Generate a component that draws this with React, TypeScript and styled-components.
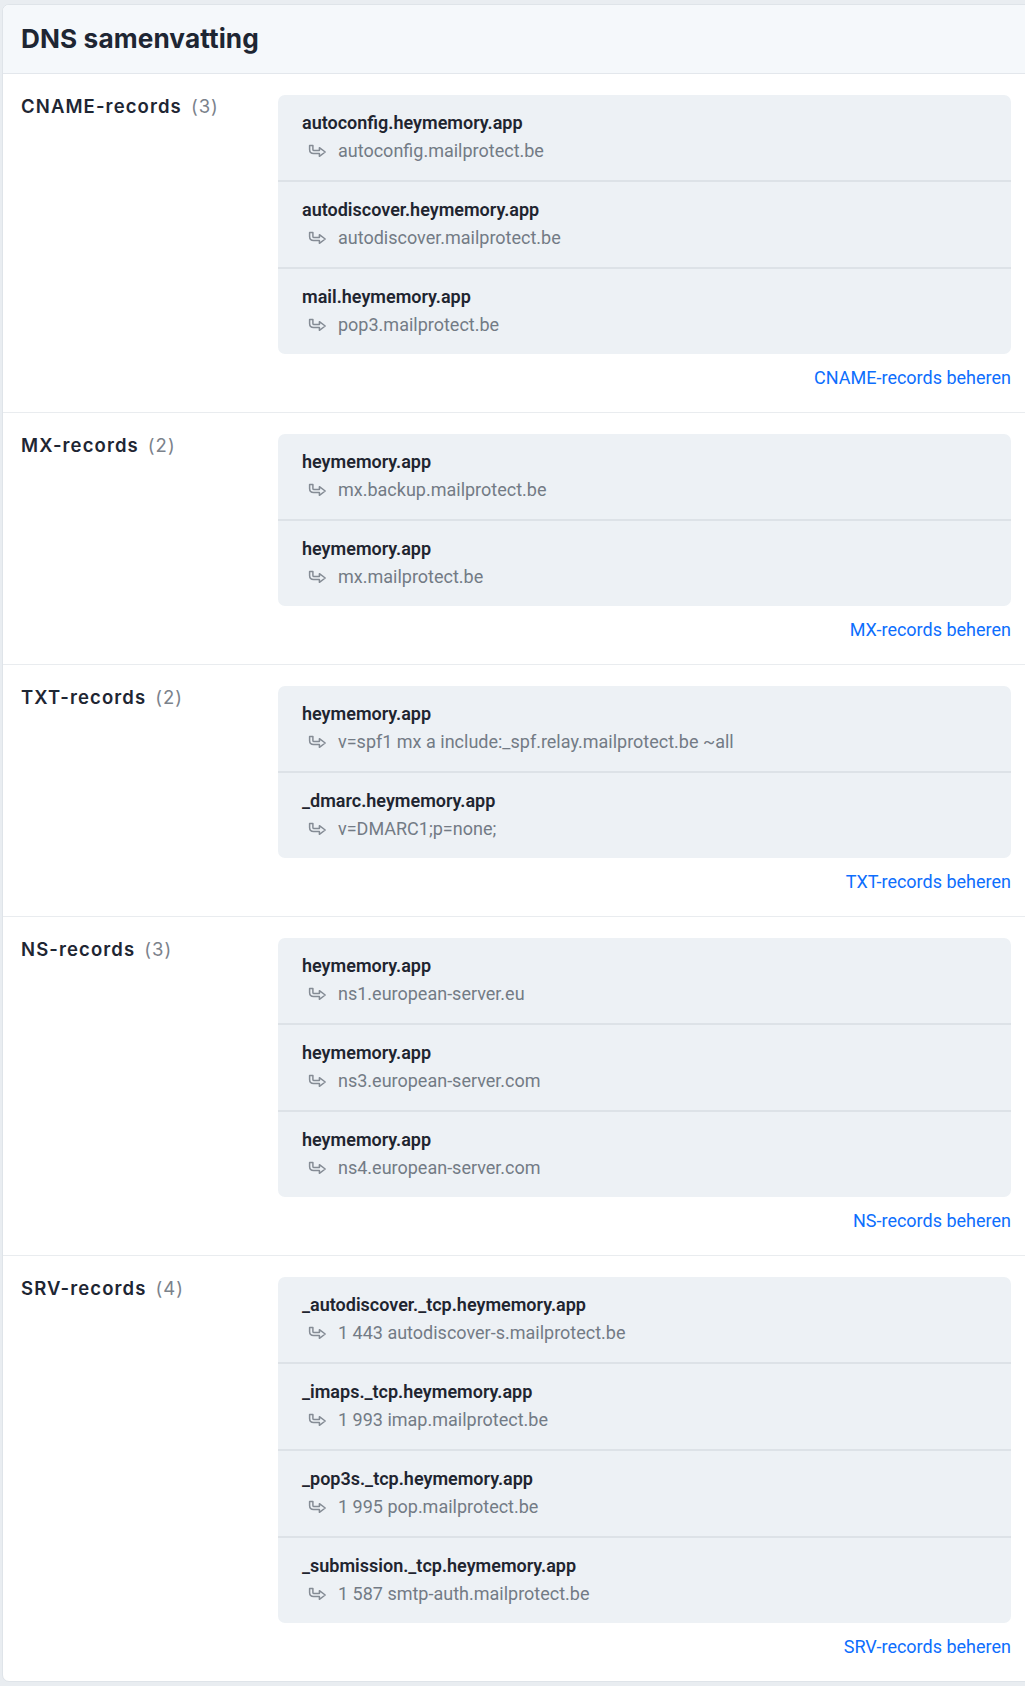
import React from "react";
import styled, { createGlobalStyle } from "styled-components";

const GlobalStyle = createGlobalStyle`
  html, body {
    margin: 0;
    padding: 0;
    background: #e9edf1;
    overflow-x: hidden;
  }
  body {
    font-family: Roboto, "Liberation Sans", Arial, sans-serif;
    color: #212529;
  }
  * { box-sizing: border-box; }
`;

const Page = styled.div`
  padding: 4px 0 5px 2px;
`;

const Card = styled.section`
  width: 1030px;
  background: #ffffff;
  border: 1px solid #dfe4e9;
  border-radius: 7px;
  overflow: hidden;
`;

const CardHeader = styled.header`
  background: #f5f8fb;
  border-bottom: 1px solid #e3e7ec;
  height: 69px;
  display: flex;
  align-items: center;
  padding: 0 18px 2px;
`;

const Title = styled.h1`
  margin: 0;
  font-family: Inter, "DejaVu Sans", sans-serif;
  font-weight: 700;
  font-size: 26.2px;
  letter-spacing: 0.1px;
  color: #1e2633;
`;

const Section = styled.div`
  display: grid;
  grid-template-columns: 257px 1fr;
  padding: 21px 20px 22px 18px;
  & + & {
    border-top: 1px solid #e9ecef;
  }
`;

const Label = styled.h2`
  margin: 0;
  font-family: Inter, "DejaVu Sans", sans-serif;
  font-weight: 600;
  font-size: 18.5px;
  line-height: 22px;
  letter-spacing: 1.1px;
  color: #1e2633;
  display: flex;
  align-items: baseline;
`;

const Count = styled.span`
  font-weight: 400;
  color: #7b828b;
  margin-left: 9px;
  letter-spacing: 1px;
`;

const Content = styled.div`
  display: flex;
  flex-direction: column;
`;

const RecordList = styled.ul`
  list-style: none;
  margin: 0;
  padding: 0;
  background: #edf1f5;
  border-radius: 7px;
`;

const RecordRow = styled.li`
  padding: 16px 24px 17px;
  & + & {
    border-top: 2px solid #dde2e7;
  }
`;

const RecordName = styled.div`
  font-size: 18px;
  line-height: 24px;
  font-weight: 600;
  color: #1f2530;
`;

const RecordValue = styled.div`
  margin-top: 4px;
  padding-left: 6px;
  display: flex;
  align-items: center;
  gap: 11px;
  font-size: 18px;
  line-height: 24px;
  color: #737b85;
`;

const ManageLink = styled.a`
  align-self: flex-end;
  margin-top: 12px;
  font-size: 18px;
  line-height: 24px;
  color: #0d6efd;
  text-decoration: none;
`;

const ArrowIcon = () => (
  <svg width="19" height="14" viewBox="0 0 19 14" fill="none" aria-hidden="true">
    <path
      d="M1.6 1.6 H4.9 V5.4 Q4.9 6.5 6 6.5 H11.4 V3.7 L17.2 8 L11.4 12.3 V9.5 H5.6 Q1.6 9.5 1.6 5.5 Z"
      stroke="#858c95"
      strokeWidth="1.5"
      strokeLinejoin="round"
    />
  </svg>
);

type Rec = { name: string; value: string };
type Group = { type: string; records: Rec[] };

const groups: Group[] = [
  {
    type: "CNAME",
    records: [
      { name: "autoconfig.heymemory.app", value: "autoconfig.mailprotect.be" },
      { name: "autodiscover.heymemory.app", value: "autodiscover.mailprotect.be" },
      { name: "mail.heymemory.app", value: "pop3.mailprotect.be" },
    ],
  },
  {
    type: "MX",
    records: [
      { name: "heymemory.app", value: "mx.backup.mailprotect.be" },
      { name: "heymemory.app", value: "mx.mailprotect.be" },
    ],
  },
  {
    type: "TXT",
    records: [
      { name: "heymemory.app", value: "v=spf1 mx a include:_spf.relay.mailprotect.be ~all" },
      { name: "_dmarc.heymemory.app", value: "v=DMARC1;p=none;" },
    ],
  },
  {
    type: "NS",
    records: [
      { name: "heymemory.app", value: "ns1.european-server.eu" },
      { name: "heymemory.app", value: "ns3.european-server.com" },
      { name: "heymemory.app", value: "ns4.european-server.com" },
    ],
  },
  {
    type: "SRV",
    records: [
      { name: "_autodiscover._tcp.heymemory.app", value: "1 443 autodiscover-s.mailprotect.be" },
      { name: "_imaps._tcp.heymemory.app", value: "1 993 imap.mailprotect.be" },
      { name: "_pop3s._tcp.heymemory.app", value: "1 995 pop.mailprotect.be" },
      { name: "_submission._tcp.heymemory.app", value: "1 587 smtp-auth.mailprotect.be" },
    ],
  },
];

export default function App() {
  return (
    <>
      <GlobalStyle />
      <Page>
        <Card>
          <CardHeader>
            <Title>DNS samenvatting</Title>
          </CardHeader>
          {groups.map((g) => (
            <Section key={g.type}>
              <Label>
                {g.type}-records<Count>({g.records.length})</Count>
              </Label>
              <Content>
                <RecordList>
                  {g.records.map((r, i) => (
                    <RecordRow key={i}>
                      <RecordName>{r.name}</RecordName>
                      <RecordValue>
                        <ArrowIcon />
                        <span>{r.value}</span>
                      </RecordValue>
                    </RecordRow>
                  ))}
                </RecordList>
                <ManageLink href="#">{g.type}-records beheren</ManageLink>
              </Content>
            </Section>
          ))}
        </Card>
      </Page>
    </>
  );
}
